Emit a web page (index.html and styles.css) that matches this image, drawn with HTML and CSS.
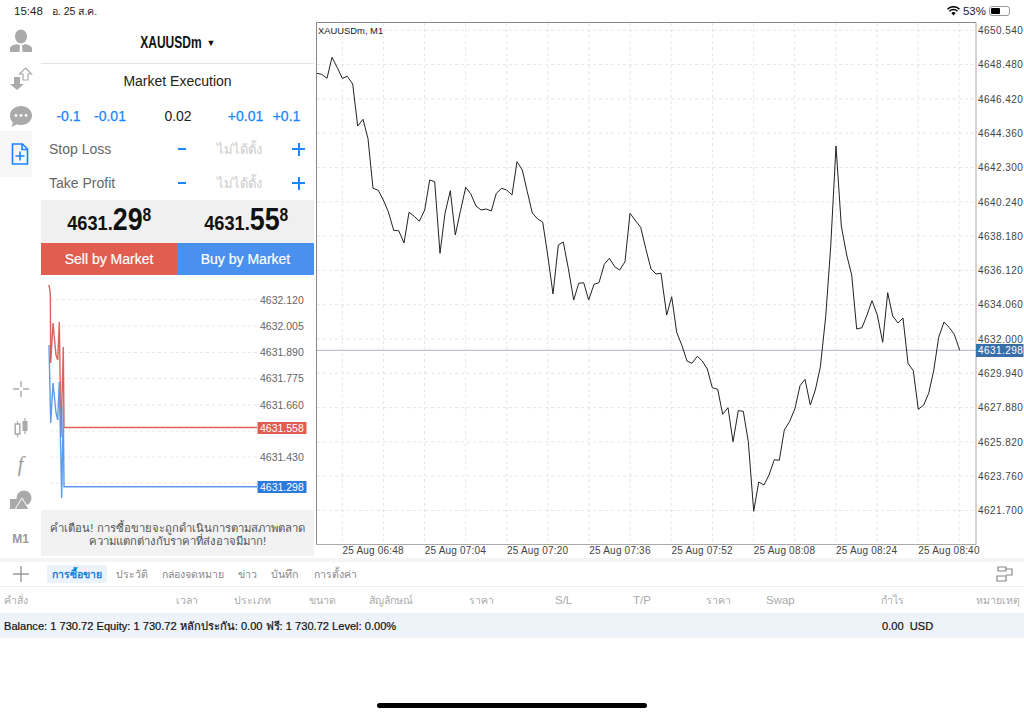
FILE: index.html
```html
<!DOCTYPE html>
<html lang="th">
<head>
    <meta charset="UTF-8">
    <title>XAUUSDm, M1</title>
    <link rel="stylesheet" href="styles.css">
</head>
<body>
    <div class="status-bar">
        <span class="status-time">15:48</span>
        <span class="status-date">อ. 25 ส.ค.</span>
        <span class="status-right">
            <svg class="wifi" width="13" height="10" viewBox="0 0 13 10">
                <path d="M0.5 3.2a8.5 8.5 0 0 1 12 0M2.5 5.2a5.6 5.6 0 0 1 8 0" fill="none" stroke="#000" stroke-width="1.5"/>
                <path d="M4.4 7.1a2.9 2.9 0 0 1 4.2 0L6.5 9.4z" fill="#000"/>
            </svg>
            <span>53%</span>
            <span class="battery"><span class="battery-level"></span></span>
        </span>
    </div>

    <div class="main">
        <div class="sidebar">
            <div class="nav-group">
                <div class="nav-item">
                    <svg width="24" height="24" viewBox="0 0 24 24">
                        <ellipse cx="12" cy="7.5" rx="6" ry="7"/>
                        <path d="M1 23v-3c0-3 3-4 7-5l4 2 4-2c4 1 7 2 7 5v3z"/>
                        <path d="M11 17h2l.5 6h-3z" fill="#fff"/>
                    </svg>
                </div>
                <div class="nav-item">
                    <svg width="24" height="24" viewBox="0 0 24 24">
                        <path d="M5 11h6v7h4l-7 6-7-6h4z"/>
                        <path d="M14 14V8h-3.500l6-6 6 6H19v6z" fill="#fff" stroke="#aaa" stroke-width="1.200"/>
                    </svg>
                </div>
                <div class="nav-item">
                    <svg width="24" height="24" viewBox="0 0 24 24">
                        <path d="M12 2c6 0 11 4 11 9.500S18 21 12 21c-1.500 0-3-.2-4-.7L2.500 23l1.500-4.500C2 17 1 14.500 1 11.500 1 6 6 2 12 2z"/>
                        <circle cx="7" cy="11.500" r="1.400" fill="#fff"/>
                        <circle cx="12" cy="11.500" r="1.400" fill="#fff"/>
                        <circle cx="17" cy="11.500" r="1.400" fill="#fff"/>
                    </svg>
                </div>
                <div class="nav-item active">
                    <svg width="24" height="24" viewBox="0 0 24 24" fill="none" stroke="#1a85ff" stroke-width="1.600">
                        <path d="M4.500 2h10l5 5v15h-15z"/>
                        <path d="M14 2v5.500h5.500"/>
                        <path d="M12 9.500v9M7.500 14h9"/>
                    </svg>
                </div>
            </div>
            <div class="nav-group">
                <div class="nav-item">
                    <svg width="24" height="24" viewBox="0 0 24 24" fill="none" stroke="#aaa" stroke-width="1.400">
                        <path d="M4 12h6M14 12h6M12 4v6M12 14v6"/>
                    </svg>
                </div>
                <div class="nav-item">
                    <svg width="24" height="24" viewBox="0 0 24 24">
                        <path d="M8.500 6v3M8.500 19v3M16 3v3M16 16v3" stroke="#aaa" stroke-width="1.200"/>
                        <rect x="6.200" y="9" width="4.600" height="10" fill="none" stroke="#aaa" stroke-width="1.500"/>
                        <rect x="13.500" y="6" width="5" height="10"/>
                    </svg>
                </div>
                <div class="nav-item"><span class="nav-f">f</span></div>
                <div class="nav-item">
                    <svg width="24" height="24" viewBox="0 0 24 24">
                        <rect x="1" y="9" width="10" height="10"/>
                        <circle cx="15" cy="8" r="7.500"/>
                        <path d="M13 8l7 11.500H6z" stroke="#fff" stroke-width="1"/>
                    </svg>
                </div>
                <div class="nav-item"><span class="nav-m1">M1</span></div>
            </div>
        </div>

        <div class="panel">
            <div class="symbol"><span class="symbol-name">XAUUSDm</span><span class="symbol-caret">▼</span></div>
            <div class="exec-type">Market Execution</div>
            <div class="lot-row">
                <span class="step">-0.1</span>
                <span class="step">-0.01</span>
                <span class="lot">0.02</span>
                <span class="step">+0.01</span>
                <span class="step">+0.1</span>
            </div>
            <div class="level-row">
                <span class="level-name">Stop Loss</span>
                <span class="level-minus"></span>
                <span class="level-value">ไม่ได้ตั้ง</span>
                <span class="level-plus"></span>
            </div>
            <div class="level-row">
                <span class="level-name">Take Profit</span>
                <span class="level-minus"></span>
                <span class="level-value">ไม่ได้ตั้ง</span>
                <span class="level-plus"></span>
            </div>
            <div class="quotes">
                <div class="quote">4631.<span class="quote-big">29</span><span class="quote-sup">8</span></div>
                <div class="quote">4631.<span class="quote-big">55</span><span class="quote-sup">8</span></div>
            </div>
            <div class="actions">
                <div class="btn btn-sell">Sell by Market</div>
                <div class="btn btn-buy">Buy by Market</div>
            </div>
            <svg class="tick-chart" width="273" height="235" viewBox="41 275 273 235">
                <g class="grid">
                    <path d="M50 299.700H257M50 326H257M50 352.600H257M50 378.600H257M50 405H257M50 431H257M50 457H257M50 483H257"/>
                </g>
                <text class="tick-label" x="260" y="303.500">4632.120</text>
                <text class="tick-label" x="260" y="329.800">4632.005</text>
                <text class="tick-label" x="260" y="356.400">4631.890</text>
                <text class="tick-label" x="260" y="382.400">4631.775</text>
                <text class="tick-label" x="260" y="408.800">4631.660</text>
                <text class="tick-label" x="260" y="460.800">4631.430</text>
                <polyline class="ask-line" points="49,285 50.300,293 50.700,363 53,323 56,355 57.700,360 59.300,322 61,437 63.300,347 64,427.500 257,427.500"/>
                <polyline class="bid-line" points="49,345 50.700,423 53,383 56,413 57.700,420 59.300,382 61.700,498 63.300,407 64,486.700 257,486.700"/>
                <rect class="tag-ask" x="257.500" y="422" width="49" height="12"/>
                <text class="tag-label" x="260" y="432">4631.558</text>
                <rect class="tag-bid" x="257.500" y="481" width="49" height="12"/>
                <text class="tag-label" x="260" y="491">4631.298</text>
            </svg>
            <div class="warning">
                คำเตือน! การซื้อขายจะถูกดำเนินการตามสภาพตลาด<br>
                ความแตกต่างกับราคาที่ส่งอาจมีมาก!
            </div>
        </div>

        <svg class="chart" width="710" height="536" viewBox="314 22 710 536">
            <g class="grid">
                <path d="M342.300 23V544M383.400 23V544M424.500 23V544M465.700 23V544M506.800 23V544M547.900 23V544M589.100 23V544M630.200 23V544M671.300 23V544M712.500 23V544M753.600 23V544M794.700 23V544M835.900 23V544M877 23V544M918.100 23V544M959.300 23V544"/>
                <path d="M317 30.300H976M317 64.600H976M317 98.900H976M317 133.200H976M317 167.500H976M317 201.800H976M317 236.100H976M317 270.400H976M317 304.700H976M317 339H976M317 373.300H976M317 407.600H976M317 441.900H976M317 476.200H976M317 510.500H976"/>
            </g>
            <line class="price-line" x1="317" y1="350.300" x2="976" y2="350.300"/>
            <polyline class="price" points="316.700,73.300 321.700,74.300 327,78.300 332,57.300 337.300,67.700 342.300,78.300 347.300,76.300 352.700,84 357.700,126 363,119.300 368,138.700 373,188.300 378.300,190.300 383.300,200 388.300,211.700 393.700,230.300 398.700,230.700 404,243 409,212.300 414.300,216.300 419.300,221.300 424.700,210 429.700,180 434.700,181.700 440,253.300 445,213.300 450.300,190.700 455.300,235 460.300,211.700 465.700,187.300 470.700,193.700 476,206 481,210 486.300,209 491.300,211 496.300,193.300 501.700,188.300 506.700,190 512,195 517,161.700 522.300,170 527.300,191.700 532.300,213 537.700,219 542.700,222 547.700,255 553,294 558.300,245 563.300,242 568.300,268.300 573.700,300 578.700,283.300 583.700,282.700 588.700,300 594,284.300 599,282.700 604.300,264.300 609.300,258.300 614.700,266.700 619.700,270 625,261.700 630,213.300 635,220 640.700,227.300 645.700,248.300 651,269 656,274 661,273.300 666.700,315 671.700,296.700 676.700,332.300 682,345.700 687,361 692,363.300 697.300,356.300 702.300,361 707.300,369 712.300,387.700 717.700,389.300 722.700,414.300 728,407.700 733,441.700 738.300,410.700 743.300,411.300 748.300,441.700 753.700,511.300 758.700,482 764,485 769,475 774.300,459.700 779.300,460.300 784.300,430 789.700,421.300 795,408.300 800,385.700 805,379.300 810.300,405 815.300,390 820.300,367.300 825.700,316.700 830.700,246.700 836,146 841.300,226 846.700,255 851.700,275 856.700,329 862,327.700 867,315 872,300.700 877.300,315 882.700,342.300 887.700,292.700 892.700,316 898,323 903,318 908,363.300 913.300,370.700 918.300,409.300 923.700,405 928.700,393.300 933.700,370.700 938.700,337.300 944,322 949,327.300 954.300,334.300 959.700,350.300"/>
            <path class="frame-top" d="M316.500 544.500V22.500H976"/>
            <path class="frame-side" d="M976 22.500V544.500H316.500"/>
            <text class="chart-title" x="318" y="33.500">XAUUSDm, M1</text>
            <g class="axis-y">
                <text x="978" y="34">4650.540</text>
                <text x="978" y="68.300">4648.480</text>
                <text x="978" y="102.600">4646.420</text>
                <text x="978" y="136.900">4644.360</text>
                <text x="978" y="171.200">4642.300</text>
                <text x="978" y="205.500">4640.240</text>
                <text x="978" y="239.800">4638.180</text>
                <text x="978" y="274.100">4636.120</text>
                <text x="978" y="308.400">4634.060</text>
                <text x="978" y="342.700">4632.000</text>
                <text x="978" y="377">4629.940</text>
                <text x="978" y="411.300">4627.880</text>
                <text x="978" y="445.600">4625.820</text>
                <text x="978" y="479.900">4623.760</text>
                <text x="978" y="514.200">4621.700</text>
            </g>
            <rect class="axis-tag" x="976" y="344" width="47.500" height="13"/>
            <text class="axis-tag-label" x="978" y="354">4631.298</text>
            <g class="axis-x">
                <text x="342.500" y="554">25 Aug 06:48</text>
                <text x="424.700" y="554">25 Aug 07:04</text>
                <text x="507" y="554">25 Aug 07:20</text>
                <text x="589.300" y="554">25 Aug 07:36</text>
                <text x="671.500" y="554">25 Aug 07:52</text>
                <text x="753.800" y="554">25 Aug 08:08</text>
                <text x="836" y="554">25 Aug 08:24</text>
                <text x="918.300" y="554">25 Aug 08:40</text>
            </g>
        </svg>
    </div>

    <div class="terminal">
        <div class="tabs">
            <svg class="tabs-add" width="16" height="16" viewBox="0 0 16 16" fill="none" stroke="#999" stroke-width="1.400">
                <path d="M8 0v16M0 8h16"/>
            </svg>
            <div class="tab selected">การซื้อขาย</div>
            <div class="tab">ประวัติ</div>
            <div class="tab">กล่องจดหมาย</div>
            <div class="tab">ข่าว</div>
            <div class="tab">บันทึก</div>
            <div class="tab tab-last">การตั้งค่า</div>
            <svg class="tabs-layout" width="17" height="16" viewBox="0 0 17 16" fill="none" stroke="#888" stroke-width="1.200">
                <path d="M2 1h8v4H2zM1 10h9v5H1zM10 3h6v6h-6"/>
            </svg>
        </div>
        <div class="columns">
            <span>คำสั่ง</span>
            <span>เวลา</span>
            <span>ประเภท</span>
            <span>ขนาด</span>
            <span>สัญลักษณ์</span>
            <span>ราคา</span>
            <span class="col-latin">S/L</span>
            <span class="col-latin">T/P</span>
            <span>ราคา</span>
            <span class="col-latin">Swap</span>
            <span>กำไร</span>
            <span class="col-note">หมายเหตุ</span>
        </div>
        <div class="balance">
            <span class="balance-text">Balance: 1 730.72 Equity: 1 730.72 หลักประกัน: 0.00 ฟรี: 1 730.72 Level: 0.00%</span>
            <span>0.00&nbsp; USD</span>
        </div>
    </div>

    <div class="home-bar"></div>
</body>
</html>
```

FILE: styles.css
```css
* {
    margin: 0;
    padding: 0;
    box-sizing: border-box;
}

body {
    width: 1024px;
    height: 715px;
    background: #fff;
    font-family: 'Liberation Sans', 'Noto Sans', sans-serif;
    color: #111;
    overflow: hidden;
    display: flex;
    flex-direction: column;
}

/* status bar */
.status-bar {
    height: 22px;
    flex: none;
    display: flex;
    align-items: center;
    padding: 0 14px;
    font-size: 11.5px;
    color: #222;
}

.status-date {
    margin-left: 9px;
    font-size: 10.6px;
}

.status-right {
    margin-left: auto;
    display: flex;
    align-items: center;
    gap: 3px;
}

.battery {
    width: 21px;
    height: 10px;
    border: 1px solid #999;
    border-radius: 3px;
    padding: 1px;
    display: flex;
}

.battery-level {
    width: 53%;
    background: #000;
    border-radius: 1px;
}

.main {
    height: 536px;
    flex: none;
    display: flex;
}

/* left icons */
.sidebar {
    width: 41px;
    flex: none;
    display: flex;
    flex-direction: column;
    justify-content: space-between;
}

.nav-item {
    height: 37.500px;
    width: 41px;
    display: flex;
    align-items: center;
    justify-content: center;
}

.nav-item svg {
    fill: #aaa;
}

.nav-item.active {
    width: 32px;
    height: 46px;
    margin: -4px 0;
    padding-left: 9px;
    background: #f7f7f7;
    justify-content: flex-start;
}

.nav-item.active svg {
    fill: none;
    margin-left: -1px;
}

.nav-f {
    font-family: 'Liberation Serif', serif;
    font-style: italic;
    font-size: 20px;
    color: #999;
}

.nav-m1 {
    font-size: 12px;
    font-weight: bold;
    color: #999;
}

/* order panel */
.panel {
    width: 273px;
    flex: none;
    display: flex;
    flex-direction: column;
}

.panel > * {
    flex: none;
}

.symbol {
    height: 42px;
    border-bottom: 1px solid #e4e4e4;
    display: flex;
    align-items: center;
    justify-content: center;
    gap: 5px;
}

.symbol-name {
    font-size: 16px;
    font-weight: bold;
    margin: 0 -10px;
    transform: scaleX(0.75);
}

.symbol-caret {
    font-size: 9px;
}

.exec-type {
    height: 34px;
    font-size: 14px;
    line-height: 34px;
    text-align: center;
    color: #222;
}

.lot-row {
    height: 34px;
    padding: 2px 0 0 8px;
    display: grid;
    grid-template-columns: 39px 44px 92px 43px 39px;
    align-items: center;
    text-align: center;
    font-size: 14px;
}

.step {
    color: #1a85ff;
    -webkit-text-stroke: 0.25px #1a85ff;
}

.lot {
    color: #222;
}

.level-row {
    height: 34px;
    padding: 0 9px 0 8px;
    display: flex;
    align-items: center;
    font-size: 14px;
}

.level-name {
    width: 129px;
    color: #666;
}

.level-minus {
    width: 8px;
    height: 2px;
    background: #1a85ff;
}

.level-value {
    width: 44px;
    margin-left: 31px;
    font-size: 13px;
    color: #ccc;
    white-space: nowrap;
}

.level-plus {
    width: 13px;
    height: 13px;
    margin-left: auto;
    background: linear-gradient(#1a85ff, #1a85ff) center / 100% 2px no-repeat,
        linear-gradient(#1a85ff, #1a85ff) center / 2px 100% no-repeat;
}

.quotes {
    height: 43px;
    background: #f0f0f0;
    display: flex;
}

.quote {
    flex: 1;
    text-align: center;
    font-size: 21px;
    font-weight: bold;
    line-height: 40px;
    transform: scaleX(0.866);
}

.quote-big {
    font-size: 31px;
}

.quote-sup {
    font-size: 18px;
    vertical-align: 9px;
    line-height: 0;
}

.actions {
    height: 32px;
    display: flex;
}

.btn {
    display: flex;
    align-items: center;
    justify-content: center;
    color: #fff;
    font-size: 14px;
    -webkit-text-stroke: 0.2px #fff;
}

.btn-sell {
    width: 136px;
    background: #e05d50;
}

.btn-buy {
    flex: 1;
    background: #4a90ee;
}

.tick-chart {
    display: block;
}

.grid path {
    fill: none;
    stroke: #e6e6e6;
    stroke-dasharray: 3 3;
}

.tick-label {
    font-size: 10.500px;
    fill: #666;
}

.ask-line,
.bid-line {
    fill: none;
    stroke-width: 1.400;
}

.ask-line {
    stroke: #d9655a;
}

.bid-line {
    stroke: #5d9bea;
}

.tag-ask {
    fill: #e05d50;
}

.tag-bid {
    fill: #2a7be0;
}

.tag-label {
    font-size: 10.500px;
    fill: #fff;
}

.warning {
    height: 46px;
    background: #f2f2f2;
    text-align: center;
    font-size: 11.300px;
    line-height: 13px;
    padding-top: 12px;
    color: #555;
    white-space: nowrap;
}

/* main chart */
.chart {
    display: block;
    flex: none;
}

.price {
    fill: none;
    stroke: #222;
    stroke-width: 1;
}

.price-line {
    stroke: #a9b4c4;
}

.frame-top {
    fill: none;
    stroke: #888;
}

.frame-side {
    fill: none;
    stroke: #aaa;
}

.chart-title {
    font-size: 9.400px;
    fill: #222;
}

.axis-y text,
.axis-tag-label,
.axis-x text {
    font-size: 10px;
}

.axis-y text,
.axis-tag-label {
    letter-spacing: 0.450px;
}

.axis-x text {
    letter-spacing: 0.200px;
}

.axis-y text,
.axis-x text {
    fill: #444;
}

.axis-tag {
    fill: #3a6ea8;
}

.axis-tag-label {
    fill: #fff;
}

/* terminal */
.terminal {
    flex: none;
    border-top: 4px solid #f5f5f5;
}

.tabs {
    height: 24px;
    display: flex;
    align-items: center;
    gap: 4px;
    padding: 0 11px 0 13px;
    font-size: 10.600px;
    color: #888;
}

.tabs-add {
    margin-right: 14px;
}

.tab {
    padding: 0 5px;
    height: 18px;
    line-height: 18px;
    white-space: nowrap;
}

.tab.selected {
    background: #eaf3fb;
    color: #1a7de0;
    font-size: 10.500px;
    font-weight: bold;
    border-radius: 2px;
}

.tab-last {
    margin-left: 2px;
}

.tabs-layout {
    margin-left: auto;
}

.columns {
    height: 27px;
    border-top: 1px solid #eee;
    padding-left: 4px;
    display: grid;
    grid-template-columns: 172px 58px 75px 60px 100px 86px 78px 73px 60px 115px 95px 1fr;
    align-items: center;
    font-size: 10.600px;
    color: #aaa;
}

.col-latin {
    font-size: 11.500px;
}

.col-note {
    white-space: nowrap;
}

.balance {
    height: 25px;
    background: #eef2f9;
    padding-left: 4px;
    display: flex;
    align-items: center;
    font-size: 11.100px;
    -webkit-text-stroke: 0.2px #111;
}

.balance-text {
    width: 878px;
}

.home-bar {
    width: 270px;
    height: 5px;
    margin: 65px auto 0;
    background: #000;
    border-radius: 3px;
    flex: none;
}
```
